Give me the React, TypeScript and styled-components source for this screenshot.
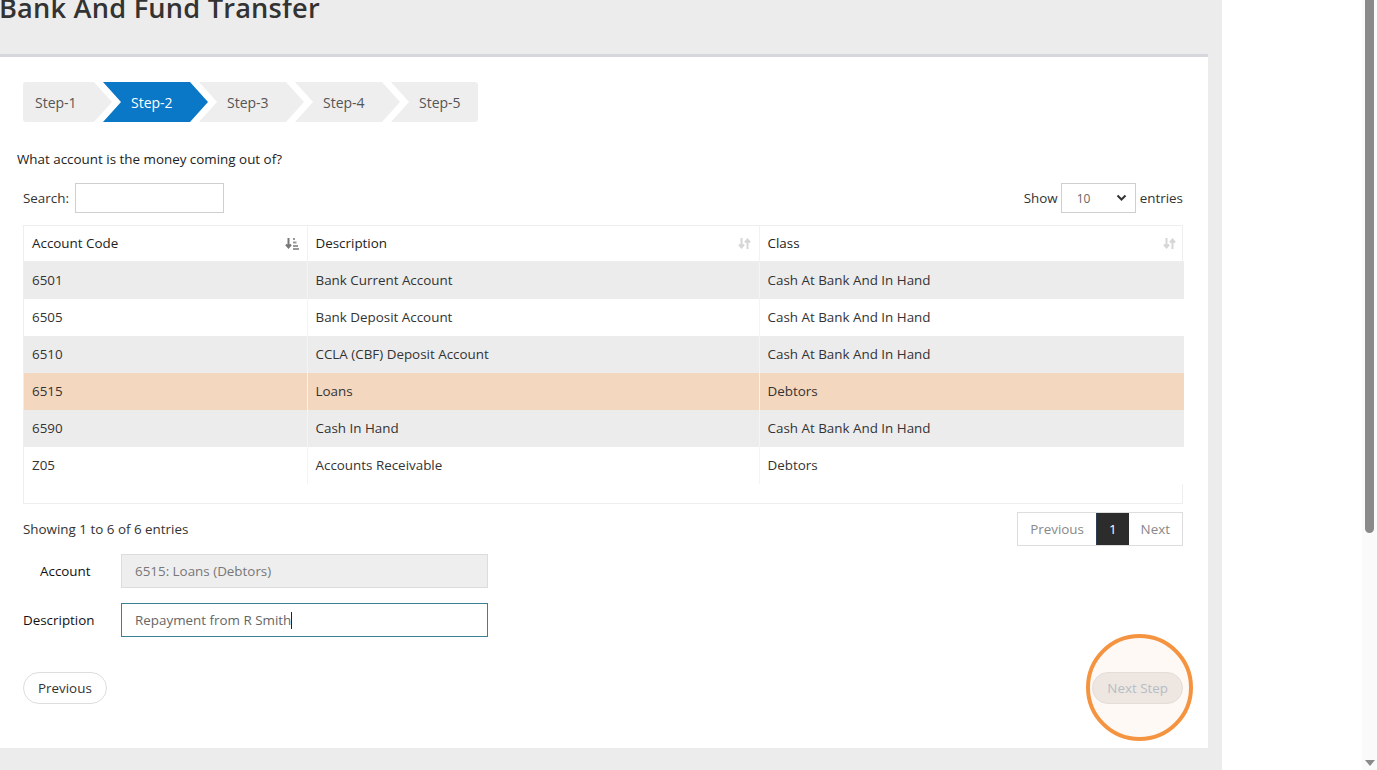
import React from 'react';
import styled, { createGlobalStyle } from 'styled-components';

const GlobalStyle = createGlobalStyle`
    html, body {
        margin: 0;
        padding: 0;
        height: 100%;
        overflow: hidden;
        background: #ffffff;
    }
    body {
        font-family: "Open Sans", "Liberation Sans", sans-serif;
        font-size: 13.4px;
        color: #333;
    }
`;

const Page = styled.div`
    display: flex;
    height: 770px;
    width: 1377px;
`;

const Main = styled.div`
    width: 1222px;
    background: #edecec;
    display: flex;
    flex-direction: column;
`;

const Gutter = styled.div`
    flex: 1;
    background: #ffffff;
`;

const Scrollbar = styled.div`
    width: 15px;
    background: #fafafa;
    display: flex;
    flex-direction: column;
    align-items: center;
    justify-content: space-between;
    padding-bottom: 4px;
    box-sizing: border-box;
`;

const ScrollThumb = styled.div`
    width: 9px;
    height: 533px;
    border-radius: 0 0 5px 5px;
    background: #8a8a8a;
`;

const ScrollArrow = styled.div`
    width: 0;
    height: 0;
    border-left: 5px solid transparent;
    border-right: 5px solid transparent;
    border-top: 6px solid #8a8a8a;
`;

const Header = styled.div`
    height: 54px;
    position: relative;
    overflow: hidden;
`;

const Title = styled.h1`
    margin: 0;
    position: absolute;
    left: -1px;
    top: -11px;
    font-size: 27.2px;
    font-weight: 600;
    color: #333;
    letter-spacing: 0.2px;
`;

const Panel = styled.div`
    width: 1208px;
    height: 694px;
    background: #ffffff;
    border-top: 3px solid #d6d7dd;
    box-sizing: border-box;
    padding: 25px 25px 0 23px;
    position: relative;
`;

const Steps = styled.div`
    display: flex;
    height: 40px;
`;

const Step = styled.div<{ $active?: boolean; $first?: boolean; $last?: boolean }>`
    position: relative;
    height: 40px;
    width: ${p => (p.$first ? 89 : p.$last ? 87 : 105)}px;
    margin-left: ${p => (p.$first ? 0 : -9)}px;
    background: ${p => (p.$active ? '#0a77c7' : '#eeeeee')};
    color: ${p => (p.$active ? '#ffffff' : '#555')};
    border-radius: ${p => (p.$first ? '3px 0 0 3px' : p.$last ? '0 3px 3px 0' : '0')};
    clip-path: ${p =>
        p.$first
            ? 'polygon(0 0, calc(100% - 18px) 0, 100% 50%, calc(100% - 18px) 100%, 0 100%)'
            : p.$last
            ? 'polygon(0 0, 100% 0, 100% 100%, 0 100%, 18px 50%)'
            : 'polygon(0 0, calc(100% - 18px) 0, 100% 50%, calc(100% - 18px) 100%, 0 100%, 18px 50%)'};
    display: flex;
    align-items: center;
    padding-left: ${p => (p.$first ? 12 : 28)}px;
    box-sizing: border-box;
    font-size: 14px;
`;

const Question = styled.div`
    margin: 28px 0 0 -6px;
    color: #222;
`;

const Toolbar = styled.div`
    display: flex;
    justify-content: space-between;
    align-items: center;
    margin-top: 15px;
    height: 30px;
    color: #333;
`;

const Field = styled.label`
    display: flex;
    align-items: center;
    gap: 5px;
`;

const SearchInput = styled.input`
    width: 149px;
    height: 30px;
    box-sizing: border-box;
    border: 1px solid #cfcfcf;
    outline: none;
    margin-left: 1px;
`;

const SelectWrap = styled.div`
    position: relative;
    width: 75px;
    height: 30px;
    border: 1px solid #cfcfcf;
    box-sizing: border-box;
    color: #666;
    font-size: 12px;
    display: flex;
    align-items: center;
    padding-left: 15px;
    margin: 0 -1px 0 -2px;
`;

const Chevron = styled.svg`
    position: absolute;
    right: 8px;
    top: 10px;
`;

const TableWrap = styled.div`
    margin-top: 12px;
    border: 1px solid #eeeeee;
    height: 279px;
    box-sizing: border-box;
`;

const Table = styled.table`
    width: 100%;
    border-collapse: collapse;
    table-layout: fixed;
`;

const Th = styled.th<{ $w: number }>`
    width: ${p => p.$w}px;
    box-sizing: border-box;
    height: 35px;
    text-align: left;
    font-weight: 400;
    color: #222;
    padding: 0 8px;
    border-left: 1px solid #f2f2f2;
    border-bottom: 1px solid #eeeeee;
    position: relative;
    &:first-child { border-left: none; }
`;

const SortIcon = styled.svg`
    position: absolute;
    right: 8px;
    top: 11px;
`;

const Tr = styled.tr<{ $stripe?: boolean; $selected?: boolean }>`
    background: ${p => (p.$selected ? '#f3d7bf' : p.$stripe ? '#edecec' : '#ffffff')};
`;

const Td = styled.td`
    height: 37px;
    padding: 0 8px;
    color: #333;
    border-left: 1px solid #f4f4f4;
    &:first-child { border-left: none; }
`;

const FooterRow = styled.div`
    display: flex;
    justify-content: space-between;
    align-items: center;
    margin-top: 8px;
`;

const Pager = styled.div`
    display: flex;
    height: 34px;
    border: 1px solid #dddddd;
    box-sizing: border-box;
`;

const PageBtn = styled.div<{ $current?: boolean }>`
    display: flex;
    align-items: center;
    padding: 0 12px;
    background: ${p => (p.$current ? '#2c2c2c' : '#ffffff')};
    color: ${p => (p.$current ? '#ffffff' : '#888')};
    border-left: ${p => (p.$current ? '1px solid #2c3e50' : 'none')};
`;

const FormRow = styled.div<{ $top: number }>`
    display: flex;
    align-items: center;
    margin-top: ${p => p.$top}px;
`;

const Label = styled.div<{ $indent?: number }>`
    width: 98px;
    padding-left: ${p => p.$indent || 0}px;
    box-sizing: border-box;
    color: #111;
`;

const TextBox = styled.div<{ $readonly?: boolean }>`
    width: 367px;
    height: 34px;
    box-sizing: border-box;
    border: 1px solid ${p => (p.$readonly ? '#dcdcdc' : '#3d7f95')};
    background: ${p => (p.$readonly ? '#eeeeee' : '#ffffff')};
    color: ${p => (p.$readonly ? '#777' : '#666')};
    display: flex;
    align-items: center;
    padding-left: 13px;
`;

const Caret = styled.span`
    display: inline-block;
    width: 1px;
    height: 17px;
    background: #222;
`;

const Actions = styled.div`
    display: flex;
    justify-content: space-between;
    margin-top: 35px;
`;

const PillButton = styled.div<{ $disabled?: boolean }>`
    height: 32px;
    border-radius: 16px;
    border: 1px solid #dddddd;
    box-sizing: border-box;
    padding: 0 14px;
    display: flex;
    align-items: center;
    background: ${p => (p.$disabled ? '#ebe9e7' : '#ffffff')};
    color: ${p => (p.$disabled ? '#a6b3c4' : '#333')};
`;

const HighlightRing = styled.div`
    position: absolute;
    left: 1086px;
    top: 577px;
    width: 107px;
    height: 107px;
    border-radius: 50%;
    border: 4px solid #f59440;
    background: rgba(250, 225, 205, 0.2);
    box-sizing: border-box;
    pointer-events: none;
`;

interface Row {
    code: string;
    desc: string;
    cls: string;
}

const rows: Row[] = [
    { code: '6501', desc: 'Bank Current Account', cls: 'Cash At Bank And In Hand' },
    { code: '6505', desc: 'Bank Deposit Account', cls: 'Cash At Bank And In Hand' },
    { code: '6510', desc: 'CCLA (CBF) Deposit Account', cls: 'Cash At Bank And In Hand' },
    { code: '6515', desc: 'Loans', cls: 'Debtors' },
    { code: '6590', desc: 'Cash In Hand', cls: 'Cash At Bank And In Hand' },
    { code: 'Z05', desc: 'Accounts Receivable', cls: 'Debtors' },
];

const SortBoth = () => (
    <SortIcon width="13" height="13" viewBox="0 0 13 13">
        <path d="M3.5 1v9M1 7.5l2.5 3 2.5-3" stroke="#d6d6d6" strokeWidth="2" fill="none" />
        <path d="M9.5 12V3M7 5.5l2.5-3 2.5 3" stroke="#d6d6d6" strokeWidth="2" fill="none" />
    </SortIcon>
);

const SortActive = () => (
    <SortIcon width="14" height="13" viewBox="0 0 14 13">
        <path d="M3.5 1v9M1 7.5l2.5 3 2.5-3" stroke="#777" strokeWidth="2" fill="none" />
        <rect x="8" y="1" width="2" height="2" fill="#999" />
        <rect x="8" y="4.5" width="3.5" height="2" fill="#999" />
        <rect x="8" y="8" width="5" height="2" fill="#999" />
        <rect x="8" y="11" width="6" height="2" fill="#999" />
    </SortIcon>
);

export default function App() {
    const steps = ['Step-1', 'Step-2', 'Step-3', 'Step-4', 'Step-5'];
    return (
        <Page>
            <GlobalStyle />
            <Main>
                <Header>
                    <Title>Bank And Fund Transfer</Title>
                </Header>
                <Panel>
                    <Steps>
                        {steps.map((s, i) => (
                            <Step key={s} $first={i === 0} $last={i === steps.length - 1} $active={i === 1}>
                                {s}
                            </Step>
                        ))}
                    </Steps>
                    <Question>What account is the money coming out of?</Question>
                    <Toolbar>
                        <Field>
                            Search: <SearchInput />
                        </Field>
                        <Field>
                            Show
                            <SelectWrap>
                                10
                                <Chevron width="11" height="8" viewBox="0 0 11 8">
                                    <path d="M1.5 1.5l4 4 4-4" stroke="#333" strokeWidth="2" fill="none" />
                                </Chevron>
                            </SelectWrap>
                            entries
                        </Field>
                    </Toolbar>
                    <TableWrap>
                        <Table>
                            <thead>
                                <tr>
                                    <Th $w={283}>Account Code<SortActive /></Th>
                                    <Th $w={452}>Description<SortBoth /></Th>
                                    <Th $w={425}>Class<SortBoth /></Th>
                                </tr>
                            </thead>
                            <tbody>
                                {rows.map((r, i) => (
                                    <Tr key={r.code} $stripe={i % 2 === 0} $selected={r.code === '6515'}>
                                        <Td>{r.code}</Td>
                                        <Td>{r.desc}</Td>
                                        <Td>{r.cls}</Td>
                                    </Tr>
                                ))}
                            </tbody>
                        </Table>
                    </TableWrap>
                    <FooterRow>
                        <span>Showing 1 to 6 of 6 entries</span>
                        <Pager>
                            <PageBtn>Previous</PageBtn>
                            <PageBtn $current>1</PageBtn>
                            <PageBtn>Next</PageBtn>
                        </Pager>
                    </FooterRow>
                    <FormRow $top={8}>
                        <Label $indent={17}>Account</Label>
                        <TextBox $readonly>6515: Loans (Debtors)</TextBox>
                    </FormRow>
                    <FormRow $top={15}>
                        <Label>Description</Label>
                        <TextBox>
                            Repayment from R Smith<Caret />
                        </TextBox>
                    </FormRow>
                    <Actions>
                        <PillButton>Previous</PillButton>
                        <PillButton $disabled>Next Step</PillButton>
                    </Actions>
                    <HighlightRing />
                </Panel>
            </Main>
            <Gutter />
            <Scrollbar>
                <ScrollThumb />
                <ScrollArrow />
            </Scrollbar>
        </Page>
    );
}
